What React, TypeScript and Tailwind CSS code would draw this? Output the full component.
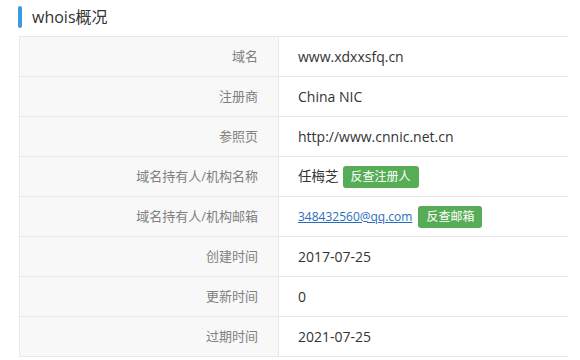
const ROWS: { label: string; value: React.ReactNode }[] = [
  { label: "域名", value: "www.xdxxsfq.cn" },
  { label: "注册商", value: "China NIC" },
  { label: "参照页", value: "http://www.cnnic.net.cn" },
  {
    label: "域名持有人/机构名称",
    value: (
      <span className="flex items-center gap-[4px]">
        <span className="text-[13.5px]">任梅芝</span>
        <button className="h-[22px] rounded-[3px] bg-[#56ad56] px-[8px] text-[12px] leading-[22px] text-white">
          反查注册人
        </button>
      </span>
    ),
  },
  {
    label: "域名持有人/机构邮箱",
    value: (
      <span className="flex items-center gap-[6px]">
        <a className="text-[12px] text-[#2a6ebb] underline" href="#">
          348432560@qq.com
        </a>
        <button className="h-[22px] rounded-[3px] bg-[#56ad56] px-[8px] text-[12px] leading-[22px] text-white">
          反查邮箱
        </button>
      </span>
    ),
  },
  { label: "创建时间", value: "2017-07-25" },
  { label: "更新时间", value: "0" },
  { label: "过期时间", value: "2021-07-25" },
];

export default function App() {
  return (
    <div
      className="h-[360px] w-[580px] overflow-hidden bg-white"
      style={{ fontFamily: '"Open Sans", "Noto Sans CJK SC", sans-serif' }}
    >
      {/* section title */}
      <div className="flex h-[36px] items-center pl-[18px]">
        <span className="mb-[3px] h-[22px] w-[4px] rounded-[2px] bg-[#3a9be0]" />
        <h2 className="mb-[3px] ml-[10px] text-[16px] text-[#333]">whois概况</h2>
      </div>

      <table className="ml-[19px] w-[549px] border-collapse">
        <tbody>
          {ROWS.map((row) => (
            <tr key={row.label} className="h-[40px]">
              <td className="w-[259px] border border-[#e8e8e8] bg-[#f8f8f8] pr-[20px] text-right text-[13px] text-[#808080]">
                {row.label}
              </td>
              <td className="border border-r-0 border-[#e8e8e8] pl-[19px] text-[14px] text-[#333]">
                {row.value}
              </td>
            </tr>
          ))}
        </tbody>
      </table>
    </div>
  );
}
